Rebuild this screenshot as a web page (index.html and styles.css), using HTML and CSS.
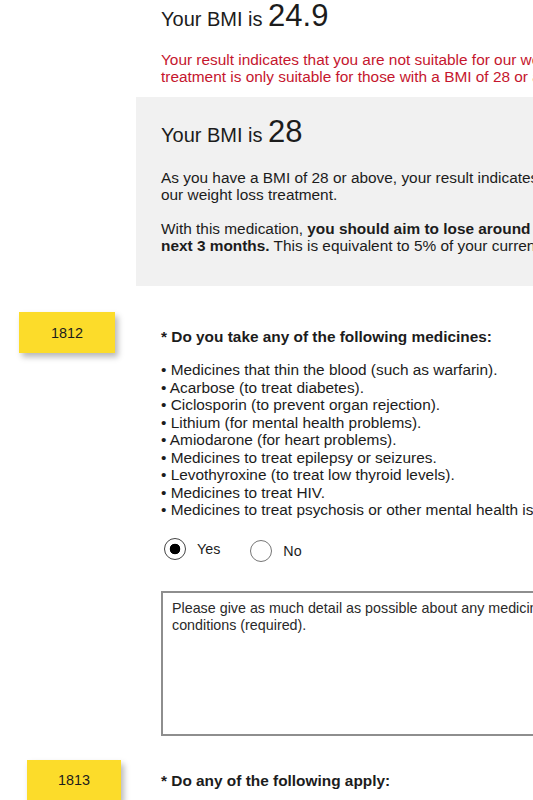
FILE: index.html
```html
<!DOCTYPE html>
<html lang="en">
<head>
<meta charset="utf-8">
<title>BMI check</title>
<link rel="stylesheet" href="styles.css">
</head>
<body>
<div class="page">
  <section class="result">
    <h2 class="bmi-title">Your BMI is <span class="bmi-num">24.9</span></h2>
    <p class="warn">Your result indicates that you are not suitable for our weight loss treatment. Our<br>treatment is only suitable for those with a BMI of 28 or above.</p>
  </section>

  <section class="result result-box">
    <h2 class="bmi-title">Your BMI is <span class="bmi-num">28</span></h2>
    <p class="copy">As you have a BMI of 28 or above, your result indicates that you are suitable for<br>our weight loss treatment.</p>
    <p class="copy">With this medication, <strong>you should aim to lose around 4kg over the</strong><br><strong>next 3 months.</strong> This is equivalent to 5% of your current body weight.</p>
  </section>

  <section class="question q-first">
    <div class="q-side"><div class="badge">1812</div></div>
    <div class="q-body">
      <p class="q-title">* Do you take any of the following medicines:</p>
      <ul class="med-list">
        <li>• Medicines that thin the blood (such as warfarin).</li>
        <li>• Acarbose (to treat diabetes).</li>
        <li>• Ciclosporin (to prevent organ rejection).</li>
        <li>• Lithium (for mental health problems).</li>
        <li>• Amiodarone (for heart problems).</li>
        <li>• Medicines to treat epilepsy or seizures.</li>
        <li>• Levothyroxine (to treat low thyroid levels).</li>
        <li>• Medicines to treat HIV.</li>
        <li>• Medicines to treat psychosis or other mental health issues.</li>
      </ul>
      <div class="radios">
        <label class="radio"><input type="radio" name="q1812" checked><span>Yes</span></label>
        <label class="radio radio-no"><input type="radio" name="q1812"><span>No</span></label>
      </div>
      <textarea class="details" placeholder="Please give as much detail as possible about any medicines or health&#10;conditions (required)."></textarea>
    </div>
  </section>

  <section class="question q-second">
    <div class="q-side q-side-shift"><div class="badge">1813</div></div>
    <div class="q-body q-body-tight">
      <p class="q-title">* Do any of the following apply:</p>
    </div>
  </section>
</div>
</body>
</html>
```
FILE: styles.css
```css
html, body {
  margin: 0;
  padding: 0;
  background: #ffffff;
}
body {
  width: 533px;
  height: 800px;
  overflow: hidden;
  font-family: "Liberation Sans", Arial, sans-serif;
  color: #1c1c1c;
  font-size: 15.4px;
}
.page {
  width: 820px;
}
p, ul, h2 {
  margin: 0;
}
.result {
  padding-left: 161px;
}
.bmi-title {
  font-weight: normal;
  font-size: 20px;
  line-height: 31px;
  color: #1c1c1c;
}
.bmi-num {
  font-size: 31px;
}
.warn {
  margin-top: 16px;
  color: #c5162e;
  line-height: 17px;
  white-space: nowrap;
}
.result-box {
  margin-top: 12px;
  margin-left: 136px;
  padding: 19px 0 32px 25px;
  background: #f1f1f1;
}
.copy {
  margin-top: 17px;
  line-height: 17px;
  white-space: nowrap;
}
.result-box .copy:first-of-type {
  margin-top: 18px;
}
.question {
  display: grid;
  grid-template-columns: 161px 1fr;
}
.q-first {
  margin-top: 26px;
}
.q-second {
  margin-top: 24px;
}
.q-side {
  padding-left: 19px;
}
.q-side-shift {
  padding-left: 27px;
}
.badge {
  width: 96px;
  height: 41px;
  background: #fcdc2a;
  box-shadow: 3px 4px 6px rgba(0, 0, 0, 0.28);
  display: flex;
  align-items: center;
  justify-content: center;
  font-size: 14.4px;
  color: #1c1c1c;
}
.q-side-shift .badge {
  width: 94px;
}
.q-body {
  padding-top: 16px;
}
.q-body-tight {
  padding-top: 12px;
}
.q-title {
  font-weight: bold;
  line-height: 17px;
  white-space: nowrap;
}
.med-list {
  list-style: none;
  padding: 0;
  margin-top: 16px;
  line-height: 17.5px;
  white-space: nowrap;
}
.radios {
  margin-top: 18px;
  display: flex;
  align-items: center;
  gap: 27px;
}
.radio {
  display: flex;
  align-items: center;
  gap: 11px;
  font-size: 14.3px;
}
.radio-no {
  margin-top: 3px;
}
.radio input {
  appearance: none;
  -webkit-appearance: none;
  margin: 0 0 0 3px;
  width: 22px;
  height: 22px;
  border: 1px solid #767676;
  border-radius: 50%;
  background: #ffffff;
}
.radio input:checked {
  border-color: #444444;
  background: radial-gradient(circle, #000000 0 5px, #ffffff 5.6px);
}
.details {
  display: block;
  box-sizing: border-box;
  margin-top: 29px;
  width: 600px;
  height: 145px;
  border: 2px solid #8e8e8e;
  border-radius: 0;
  padding: 7px 9px;
  font-family: "Liberation Sans", Arial, sans-serif;
  font-size: 14.3px;
  line-height: 17px;
  resize: none;
  white-space: pre;
  overflow: hidden;
}
.details::placeholder {
  color: #2a2a2a;
  opacity: 1;
}
```
